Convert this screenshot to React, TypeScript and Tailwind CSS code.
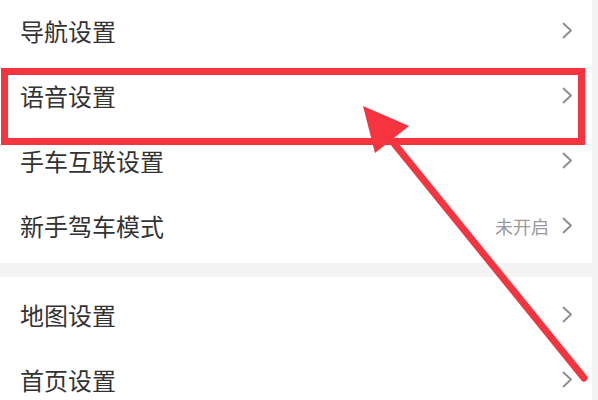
import React from 'react';

const GROUP_A = [
  { label: '导航设置' },
  { label: '语音设置' },
  { label: '手车互联设置' },
  { label: '新手驾车模式', value: '未开启' },
];

const GROUP_B = [{ label: '地图设置' }, { label: '首页设置' }];

function Chevron() {
  return (
    <svg width="11" height="17" viewBox="0 0 11 17" fill="none">
      <polyline points="1.5,1.5 9,8.5 1.5,15.5" stroke="#8c8c8c" strokeWidth="1.8" strokeLinecap="round" strokeLinejoin="round" />
    </svg>
  );
}

function Row({ label, value }: { label: string; value?: string }) {
  return (
    <div className="flex h-[65px] items-center justify-between pl-[20px] pr-[19px]">
      <span className="text-[24px] text-[#333333] leading-none">{label}</span>
      <div className="flex items-center gap-[13px]">
        {value && <span className="text-[18px] text-[#9a9a9a] leading-none">{value}</span>}
        <Chevron />
      </div>
    </div>
  );
}

export default function App() {
  return (
    <main
      className="relative h-[400px] w-[598px] overflow-hidden bg-[#f4f4f5] pr-[6px]"
      style={{ fontFamily: '"Noto Sans CJK SC", "Noto Sans", sans-serif' }}
    >
      <section className="-mt-[2px] bg-white pb-[5px]">
        {GROUP_A.map((r, i) => (
          <Row key={i} {...r} />
        ))}
      </section>
      <div className="h-[14px]" />
      <section className="bg-white pt-[5px]">
        {GROUP_B.map((r, i) => (
          <Row key={i} {...r} />
        ))}
      </section>

      {/* annotation overlay */}
      <svg className="pointer-events-none absolute inset-0" width="598" height="400" viewBox="0 0 598 400">
        <rect x="4.5" y="71.5" width="577" height="70" fill="none" stroke="#f5343f" strokeWidth="7" />
        <line x1="388" y1="136" x2="584" y2="378" stroke="#f5343f" strokeWidth="7" strokeLinecap="round" />
        <polygon points="363,106 409,126 375,153" fill="#f5343f" />
      </svg>
    </main>
  );
}
